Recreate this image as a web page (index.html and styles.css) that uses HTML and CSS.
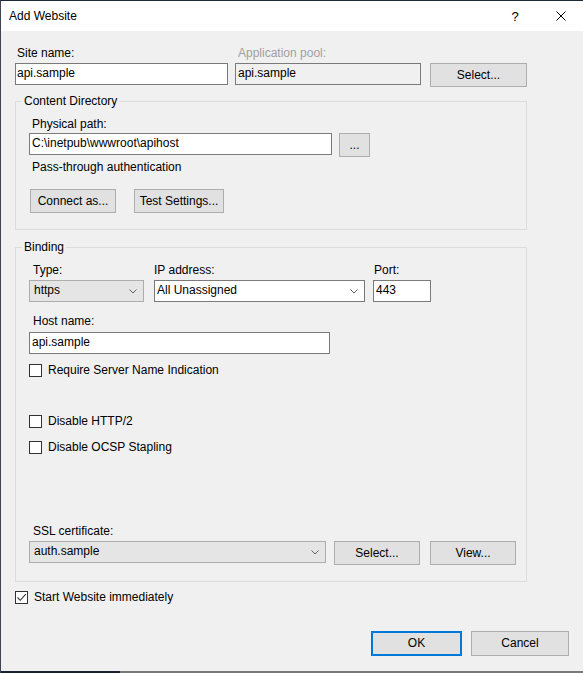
FILE: index.html
```html
<!DOCTYPE html>
<html lang="en">
<head>
<meta charset="utf-8">
<title>Add Website</title>
<link rel="stylesheet" href="styles.css">
</head>
<body>
<div class="window">
  <div class="titlebar">
    <span class="title">Add Website</span>
    <span class="tb-btn help">?</span>
    <span class="tb-btn close">
      <svg width="10" height="10" viewBox="0 0 10 10"><path d="M0.5 0.5 L9.5 9.5 M9.5 0.5 L0.5 9.5" stroke="#000" stroke-width="1" fill="none"/></svg>
    </span>
  </div>

  <div class="content">
    <div class="row row-site">
      <div class="field f-site">
        <div class="lbl">Site name:</div>
        <div class="input">api.sample</div>
      </div>
      <div class="field f-pool">
        <div class="lbl disabled">Application pool:</div>
        <div class="input readonly">api.sample</div>
      </div>
      <div class="field f-poolbtn">
        <button class="btn b-pool">Select...</button>
      </div>
    </div>

    <fieldset class="group g-content">
      <legend>Content Directory</legend>
      <div class="inner">
        <div class="lbl lbl-path">Physical path:</div>
        <div class="row">
          <div class="input i-path">C:\inetpub\wwwroot\apihost</div>
          <button class="btn b-browse">...</button>
        </div>
        <div class="note">Pass-through authentication</div>
        <div class="row row-conn">
          <button class="btn b-connect">Connect as...</button>
          <button class="btn b-test">Test Settings...</button>
        </div>
      </div>
    </fieldset>

    <fieldset class="group g-binding">
      <legend>Binding</legend>
      <div class="inner">
        <div class="row">
          <div class="field f-type">
            <div class="lbl">Type:</div>
            <div class="combo list">
              <span>https</span>
              <svg class="chev" width="8" height="5" viewBox="0 0 8 5"><path d="M0.5 0.5 L4 4 L7.5 0.5" stroke="#606060" fill="none"/></svg>
            </div>
          </div>
          <div class="field f-ip">
            <div class="lbl">IP address:</div>
            <div class="combo edit">
              <span>All Unassigned</span>
              <svg class="chev" width="8" height="5" viewBox="0 0 8 5"><path d="M0.5 0.5 L4 4 L7.5 0.5" stroke="#606060" fill="none"/></svg>
            </div>
          </div>
          <div class="field f-port">
            <div class="lbl">Port:</div>
            <div class="input">443</div>
          </div>
        </div>

        <div class="field f-host">
          <div class="lbl">Host name:</div>
          <div class="input i-host">api.sample</div>
        </div>

        <div class="check cb-sni"><span class="box"></span><span>Require Server Name Indication</span></div>
        <div class="check cb-http2"><span class="box"></span><span>Disable HTTP/2</span></div>
        <div class="check cb-ocsp"><span class="box"></span><span>Disable OCSP Stapling</span></div>

        <div class="field f-ssl">
          <div class="lbl">SSL certificate:</div>
          <div class="row">
            <div class="combo list c-ssl">
              <span>auth.sample</span>
              <svg class="chev" width="8" height="5" viewBox="0 0 8 5"><path d="M0.5 0.5 L4 4 L7.5 0.5" stroke="#606060" fill="none"/></svg>
            </div>
            <button class="btn b-sslsel">Select...</button>
            <button class="btn b-view">View...</button>
          </div>
        </div>
      </div>
    </fieldset>

    <div class="check cb-start">
      <span class="box checked">
        <svg width="11" height="11" viewBox="0 0 11 11"><path d="M1.5 5.5 L4.2 8.3 L9.8 2.2" stroke="#333" stroke-width="1.1" fill="none"/></svg>
      </span>
      <span>Start Website immediately</span>
    </div>

    <div class="actions">
      <button class="btn b-ok">OK</button>
      <button class="btn b-cancel">Cancel</button>
    </div>
  </div>

  <div class="bottom-edge"></div>
</div>
</body>
</html>
```

FILE: styles.css
```css
* {
  box-sizing: border-box;
}

html, body {
  margin: 0;
  padding: 0;
}

body {
  width: 583px;
  height: 673px;
  overflow: hidden;
  background: #f0f0f0;
  font-family: "Segoe UI", "Liberation Sans", Arial, sans-serif;
  font-size: 12px;
  line-height: 15px;
  color: #000;
}

.window {
  height: 673px;
  border-top: 1px solid #1f2b38;
  border-left: 1px solid #3c4652;
  display: flex;
  flex-direction: column;
}

/* Title bar */
.titlebar {
  height: 30px;
  background: #fff;
  display: flex;
  align-items: center;
}

.title {
  flex: 1;
  padding-left: 8px;
}

.tb-btn {
  width: 46px;
  height: 30px;
  display: flex;
  align-items: center;
  justify-content: center;
}

.help {
  font-size: 13px;
  padding-left: 2px;
}

.close svg {
  display: block;
  margin-left: 1px;
}

/* Content */
.content {
  flex: 1;
  padding: 15px 14px 0 14px;
  display: flex;
  flex-direction: column;
}

.row {
  display: flex;
}

.field {
  display: flex;
  flex-direction: column;
}

.lbl {
  height: 15px;
  padding-left: 3px;
  margin-bottom: 2px;
  white-space: nowrap;
}

.lbl.disabled {
  color: #a0a0a0;
}

.input {
  height: 22px;
  border: 1px solid #7a7a7a;
  background: #fff;
  padding-left: 2px;
  line-height: 19px;
  white-space: nowrap;
  overflow: hidden;
}

.input.readonly {
  background: #f0f0f0;
}

.btn {
  font: inherit;
  line-height: 15px;
  color: #000;
  background: #e1e1e1;
  border: 1px solid #adadad;
  padding: 0;
  height: 24px;
  margin: 0;
  text-align: center;
}

/* Row 1 */
.f-site {
  width: 213px;
}

.f-site .lbl {
  padding-left: 2px;
}

.f-site .input {
  padding-left: 1px;
}

.f-pool {
  width: 186px;
  margin-left: 7px;
}

.f-poolbtn {
  margin-left: 9px;
  padding-top: 17px;
}

.b-pool {
  width: 97px;
}

/* Group boxes */
.group {
  margin: 0;
  padding: 0;
  border: 1px solid #dcdcdc;
  width: 512px;
  min-width: 0;
}

.group legend {
  padding: 0 2px;
  margin-left: 6px;
  line-height: 15px;
  height: 15px;
}

.group .inner {
  padding: 8px 0 16px 13px;
}

.g-content {
  margin-top: 7px;
}

.lbl-path {
  margin-bottom: 1px;
}

.i-path {
  width: 303px;
}

.b-browse {
  width: 31px;
  margin-left: 7px;
}

.note {
  margin-top: 3px;
  padding-left: 3px;
}

.row-conn {
  margin-top: 14px;
}

.b-connect {
  width: 86px;
  margin-left: 1px;
}

.b-test {
  width: 90px;
  margin-left: 18px;
}

.g-binding {
  margin-top: 10px;
}

/* Combo boxes */
.combo {
  height: 22px;
  display: flex;
  align-items: center;
  justify-content: space-between;
  padding-right: 6px;
  white-space: nowrap;
}

.combo span {
  line-height: 19px;
  padding-bottom: 1px;
}

.combo.list {
  background: #e5e5e5;
  border: 1px solid #adadad;
  padding-left: 4px;
}

.combo.edit {
  background: #fff;
  border: 1px solid #7a7a7a;
  padding-left: 2px;
}

.chev {
  display: block;
  flex: none;
}

.f-type {
  width: 115px;
}

.f-type .lbl {
  padding-left: 4px;
}

.f-ip {
  width: 211px;
  margin-left: 10px;
}

.f-ip .lbl {
  padding-left: 0;
}

.f-port {
  width: 58px;
  margin-left: 8px;
}

.f-port .lbl {
  padding-left: 1px;
}

.f-host {
  margin-top: 12px;
}

.f-host .lbl {
  margin-bottom: 3px;
  padding-left: 4px;
}

.i-host {
  width: 301px;
}

/* Check boxes */
.check {
  display: flex;
  align-items: center;
  height: 15px;
  white-space: nowrap;
}

.check .box {
  width: 13px;
  height: 13px;
  border: 1px solid #333;
  background: #fff;
  margin-right: 6px;
  flex: none;
  display: flex;
  align-items: center;
  justify-content: center;
}

.check .box svg {
  display: block;
}

.cb-sni {
  margin-top: 9px;
}

.cb-http2 {
  margin-top: 36px;
}

.cb-ocsp {
  margin-top: 11px;
}

.f-ssl {
  margin-top: 69px;
}

.f-ssl .lbl {
  padding-left: 4px;
}

.c-ssl {
  width: 297px;
}

.b-sslsel {
  width: 86px;
  margin-left: 8px;
}

.b-view {
  width: 86px;
  margin-left: 10px;
}

.cb-start {
  margin-top: 8px;
}

.cb-start .box {
  border-color: #333;
}

/* Dialog buttons */
.actions {
  margin-top: 26px;
  display: flex;
  justify-content: flex-end;
}

.b-ok {
  width: 91px;
  height: 25px;
  border: 2px solid #0078d7;
}

.b-cancel {
  width: 98px;
  height: 25px;
  margin-left: 9px;
}

.bottom-edge {
  height: 2px;
  flex: none;
  background: linear-gradient(to right, #17222e 0, #17222e 119px, #7a7a7a 119px, #7a7a7a 100%);
}
```
